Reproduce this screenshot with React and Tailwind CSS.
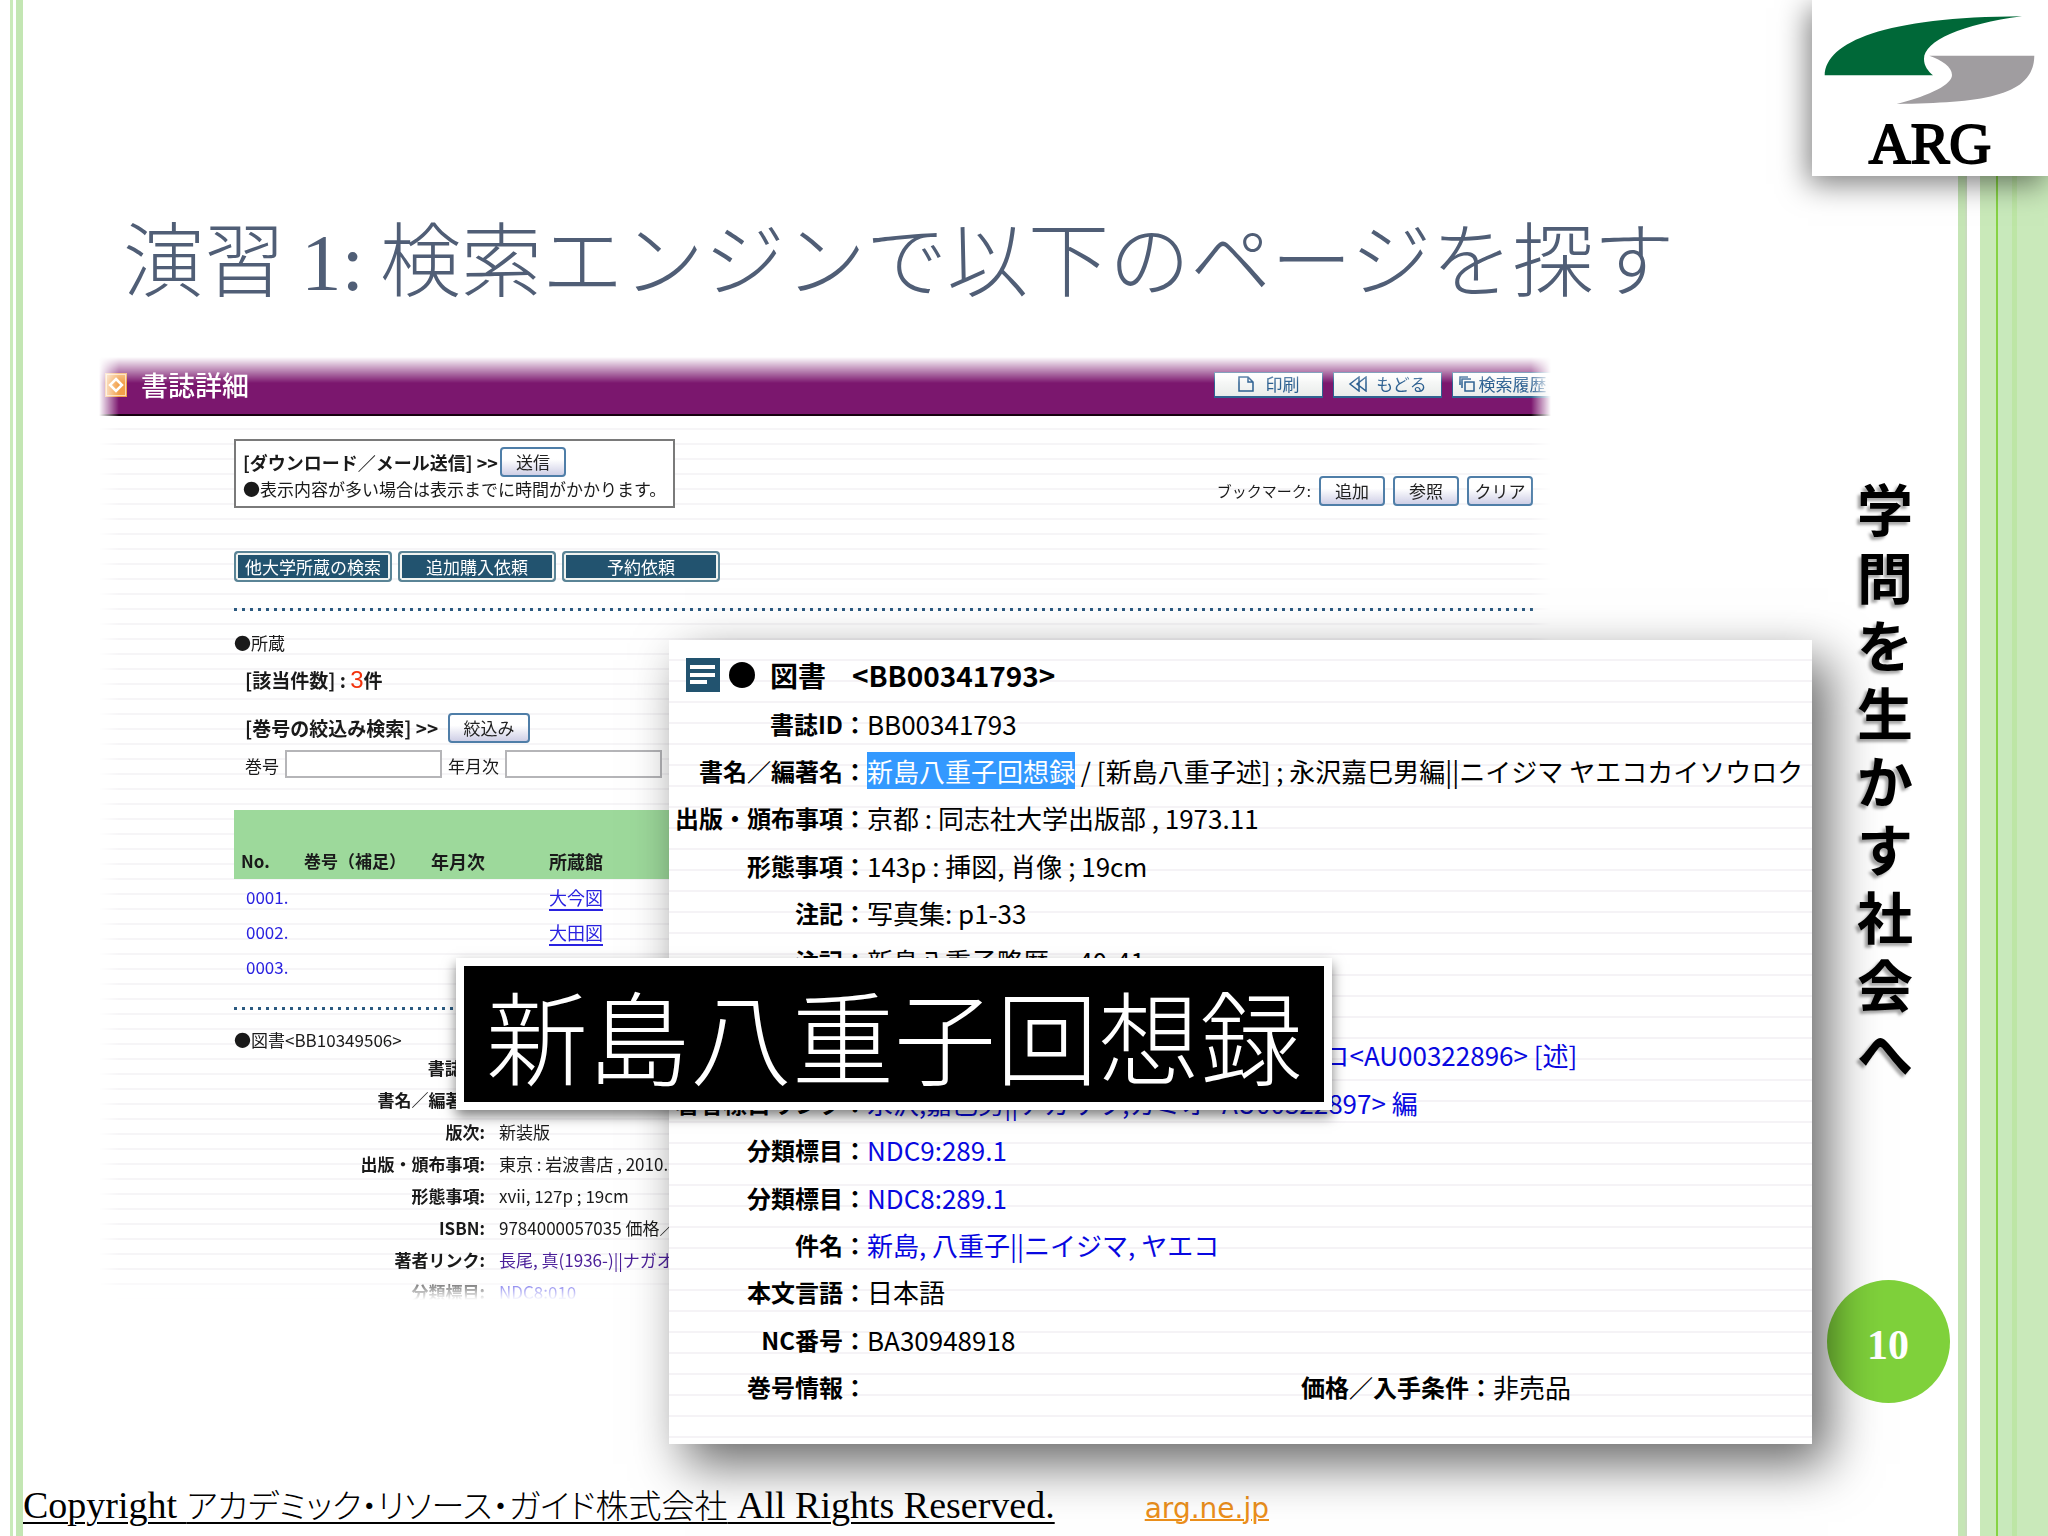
const GOTHIC = 'font-["Noto_Sans_CJK_JP",sans-serif]';
const MINCHO = 'font-["Liberation_Serif","Noto_Sans_CJK_JP",serif]';

function ArgLogo() {
  return (
    <div className="absolute top-0 right-0 z-20 flex h-[176px] w-[236px] flex-col items-center bg-white shadow-[-4px_8px_28px_rgba(0,0,0,0.5)]">
      <svg viewBox="0 0 236 112" className="h-[112px] w-full shrink-0" aria-hidden="true">
        <path d="M12.7 75.3C14 42 72 17 210 16.3C150 24 112 41 112 59C112 66 116 71 121 75.3Z" fill="#006838" />
        <path d="M117.3 55.7H222.3C222 96 172 103 84.7 104C120 95 140 84 140 75C140 67 130 60 117.3 55.7Z" fill="#a09da0" />
      </svg>
      <span className='font-["Liberation_Serif",serif] text-[58px] leading-[64px] text-black [-webkit-text-stroke:2px_black]'>ARG</span>
    </div>
  );
}

function FormButton({ children, className = "w-[66px]" }) {
  return (
    <button className={`h-[30px] shrink-0 rounded-[4px] border-2 border-[#4f7ea8] bg-linear-to-b from-white from-40% to-[#cfcfe6] text-center text-[17px] leading-[24px] text-[#222] ${className}`}>
      {children}
    </button>
  );
}

function TealButton({ children }) {
  return (
    <button className="h-[31px] w-[158px] rounded-[4px] border-2 border-[#5a8496] bg-[#22536f] text-[17px] leading-[22px] text-white shadow-[inset_0_0_0_2px_#f0f3f0]">
      {children}
    </button>
  );
}

function HeaderButton({ children, icon, className = "w-[109px]" }) {
  return (
    <button className={`flex h-[26px] shrink-0 items-center justify-center border border-b-2 border-[#2f6391] bg-linear-to-b from-white to-[#e9ecea] text-[17px] leading-[22px] text-[#2b5f90] ${className}`}>
      {icon}
      {children}
    </button>
  );
}

function DottedRule({ className }) {
  return <div className={`h-[3px] bg-[repeating-linear-gradient(90deg,#2b5a80_0_3px,transparent_3px_8px)] ${className}`} />;
}

const iconProps = { fill: "none", stroke: "#2b5f90", strokeWidth: 1.5, "aria-hidden": true };

const holdings = [
  { no: "0001.", place: "大今図" },
  { no: "0002.", place: "大田図" },
  { no: "0003.", place: "" },
];

const bookRows = [
  ["書誌ID:", "BB10349506"],
  ["書名／編著名:", "電子図書館"],
  ["版次:", "新装版"],
  ["出版・頒布事項:", "東京 : 岩波書店 , 2010.3"],
  ["形態事項:", "xvii, 127p ; 19cm"],
  ["ISBN:", "9784000057035 価格／入手条件"],
  ["著者リンク:", "長尾, 真(1936-)||ナガオ, マコト", "text-[#4b1f99]"],
  ["分類標目:", "NDC8:010", "text-[#2a22e0]"],
];

function CatalogPage() {
  return (
    <section className={`${GOTHIC} col-start-1 row-start-1 mr-[259px] ml-[74px] self-start overflow-hidden bg-[repeating-linear-gradient(180deg,white_0_13px,#f6f5f7_13px_15px)] text-[17px] leading-[24px] whitespace-nowrap text-[#1a1a1a] [mask-composite:intersect] [mask-image:linear-gradient(90deg,transparent_2px,black_22px,black_calc(100%-22px),transparent_calc(100%-2px)),linear-gradient(180deg,transparent_2px,black_28px,black_calc(100%-36px),transparent_calc(100%-8px))]`}>
      <header className="flex h-[61px] items-center border-b-2 border-[#16000f] bg-[#7b176e] pl-[8px]">
        <svg viewBox="0 0 22 24" className="h-[24px] w-[22px]" aria-hidden="true">
          <rect width="22" height="24" fill="#f2a04a" />
          <rect x="1.5" y="1.5" width="19" height="21" fill="none" stroke="#fbd9ae" />
          <path d="M11 6L17 12L11 18L5 12Z" fill="#f2a04a" stroke="white" strokeWidth="2.5" />
        </svg>
        <h2 className="ml-[14px] text-[27px] leading-[36px] font-medium text-white">書誌詳細</h2>
        <div className="ml-auto flex gap-[10px]">
          <HeaderButton icon={<svg viewBox="0 0 16 16" className="mr-[12px] size-[16px]" {...iconProps}><path d="M1 1H10L15 6V15H1Z M10 1V6H15" /></svg>}>印刷</HeaderButton>
          <HeaderButton icon={<svg viewBox="0 0 20 16" className="mr-[8px] h-[16px] w-[20px]" {...iconProps}><path d="M11 1L2 8L11 15ZM18 1L9 8L18 15Z" /></svg>}>もどる</HeaderButton>
          <HeaderButton className="w-[101px]" icon={<svg viewBox="0 0 16 16" className="mr-[4px] size-[16px] shrink-0" {...iconProps}><path d="M6 6H15V15H6ZM3 12V3H12M1 9V1H9" /></svg>}>検索履歴</HeaderButton>
        </div>
      </header>

      <div className="pr-[20px] pl-[137px]">
        <div className="mt-[23px] flex items-end justify-between">
          <div className="border-2 border-[#7a7a7a] bg-white px-[7px] pt-[6px] pb-[5px]">
            <div className="flex items-center gap-[2px]">
              <b className="text-[18px]">[ダウンロード／メール送信] &gt;&gt;</b>
              <FormButton>送信</FormButton>
            </div>
            <p>●表示内容が多い場合は表示までに時間がかかります。</p>
          </div>
          <div className="flex items-center gap-[8px] pb-[2px]">
            <span className="text-[15px]">ブックマーク:</span>
            <FormButton>追加</FormButton>
            <FormButton>参照</FormButton>
            <FormButton>クリア</FormButton>
          </div>
        </div>

        <div className="mt-[43px] flex gap-[6px]">
          <TealButton>他大学所蔵の検索</TealButton>
          <TealButton>追加購入依頼</TealButton>
          <TealButton>予約依頼</TealButton>
        </div>

        <DottedRule className="mt-[26px]" />

        <p className="mt-[20px]">●所蔵</p>
        <p className="mt-[13px] pl-[11px] text-[19px] font-bold">
          [該当件数] : <span className='font-["Liberation_Sans",sans-serif] text-[24px] font-normal text-[#f2320c]'>3</span>件
        </p>
        <div className="mt-[21px] flex items-center gap-[10px] pl-[11px]">
          <b className="text-[19px]">[巻号の絞込み検索] &gt;&gt;</b>
          <FormButton className="w-[82px]">絞込み</FormButton>
        </div>
        <div className="mt-[7px] flex items-end gap-[6px] pl-[11px]">
          <label htmlFor="volume">巻号</label>
          <input id="volume" className="h-[28px] w-[157px] border-2 border-[#b5b5b8] bg-white" />
          <label htmlFor="date">年月次</label>
          <input id="date" className="h-[28px] w-[157px] border-2 border-[#b5b5b8] bg-white" />
        </div>

        <table className="mt-[32px] w-full table-fixed text-left">
          <thead>
            <tr className="h-[69px] bg-[#9dd99b] align-bottom">
              <th className="w-[70px] pb-[6px] pl-[7px]">No.</th>
              <th className="w-[127px] pb-[6px]">巻号（補足）</th>
              <th className="w-[118px] pb-[6px] text-[18px]">年月次</th>
              <th className="pb-[6px] text-[18px]">所蔵館</th>
            </tr>
          </thead>
          <tbody className="text-[#2a22e0]">
            {holdings.map((h) => (
              <tr key={h.no} className="h-[35px]">
                <td className="pl-[12px]">{h.no}</td>
                <td />
                <td />
                <td className="text-[18px]">{h.place && <a href="#" className="underline decoration-2 underline-offset-4">{h.place}</a>}</td>
              </tr>
            ))}
          </tbody>
        </table>

        <DottedRule className="mt-[23px]" />

        <p className="mt-[18px]">●図書&lt;BB10349506&gt;</p>
        <dl className="grid auto-rows-[32px] grid-cols-[251px_1fr] items-center gap-x-[14px]">
          {bookRows.map(([label, value, color = ""]) => (
            <div key={label} className="contents">
              <dt className="text-right font-bold">{label}</dt>
              <dd className={color}>{value}</dd>
            </div>
          ))}
        </dl>
      </div>
    </section>
  );
}

const LINK = "text-[#0808e0]";

const detailRows = [
  { label: "書誌ID", value: "BB00341793" },
  {
    label: "書名／編著名",
    value: (
      <>
        <mark className="bg-[#3399ff] text-white">新島八重子回想録</mark> / [新島八重子述] ; 永沢嘉巳男編||ニイジマ ヤエコカイソウロク
      </>
    ),
  },
  { label: "出版・頒布事項", value: "京都 : 同志社大学出版部 , 1973.11" },
  { label: "形態事項", value: "143p : 挿図, 肖像 ; 19cm" },
  { label: "注記", value: "写真集: p1-33" },
  { label: "注記", value: "新島八重子略歴: p40-41" },
  { label: "", value: "" },
  { label: "著者標目リンク", value: "新島,八重子(1845-1932)||ニイジマ,ヤエコ<AU00322896> [述]", color: LINK },
  { label: "著者標目リンク", value: "永沢,嘉巳男||ナガサワ,カミオ<AU00322897> 編", color: LINK },
  { label: "分類標目", value: "NDC9:289.1", color: LINK },
  { label: "分類標目", value: "NDC8:289.1", color: LINK },
  { label: "件名", value: "新島, 八重子||ニイジマ, ヤエコ", color: LINK },
  { label: "本文言語", value: "日本語" },
  { label: "NC番号", value: "BA30948918" },
  {
    label: "巻号情報",
    value: (
      <span className="flex items-center pl-[434px]">
        <b className="text-[24px]">価格／入手条件：</b>非売品
      </span>
    ),
  },
];

function DetailCard() {
  return (
    <section className={`${GOTHIC} z-10 col-start-1 row-start-1 mt-[285px] ml-[646px] bg-[repeating-linear-gradient(180deg,white_0_19px,#f5f3f6_19px_21px)] pt-[18px] pb-[33px] whitespace-nowrap text-black shadow-[16px_20px_48px_rgba(0,0,0,0.6)]`}>
      <h2 className="flex h-[34px] items-center pl-[17px] text-[28px] leading-[34px] font-bold">
        <svg viewBox="0 0 34 34" className="size-[34px]" aria-hidden="true">
          <rect width="34" height="34" fill="#22536f" />
          <path d="M4 9H29M4 17H29M4 24H21" stroke="white" strokeWidth="4" />
        </svg>
        <span className="ml-[9px] size-[26px] rounded-full bg-black" />
        <span className="ml-[15px]">図書</span>
        <span className="ml-[26px]">&lt;BB00341793&gt;</span>
      </h2>
      <dl className="mt-[8px] grid h-[711px] auto-rows-fr grid-cols-[198px_1fr] items-center">
        {detailRows.map((row, i) => (
          <div key={i} className="contents">
            <dt className="text-right text-[24px] leading-[32px] font-bold">{row.label && row.label + "："}</dt>
            <dd className={`text-[26px] leading-[32px] ${row.color ?? ""}`}>{row.value}</dd>
          </div>
        ))}
      </dl>
    </section>
  );
}

export default function App() {
  return (
    <div className="relative flex min-h-screen overflow-hidden bg-white">
      <div className="flex w-[23px] shrink-0 justify-end gap-[3px]" aria-hidden="true">
        <div className="w-[3px] bg-[#c9eab9]" />
        <div className="w-[7px] bg-[#c3e6b3]" />
      </div>

      <main className="relative z-10 flex min-w-0 flex-1 flex-col">
        <h1 className={`${MINCHO} pt-[209px] pl-[100px] text-[81px] leading-[108px] font-light whitespace-nowrap text-[#505e76]`}>
          演習<span className="mx-[16px]">1:</span>検索エンジンで以下のページを探す
        </h1>

        <div className="mt-[38px] grid">
          <CatalogPage />
          <DetailCard />
          <p className={`${MINCHO} z-20 col-start-1 row-start-1 mt-[603px] ml-[433px] self-start justify-self-start border-8 border-white bg-black px-[22px] pt-[20px] text-[102px] leading-[116px] font-light whitespace-nowrap text-white shadow-[0_6px_12px_rgba(0,0,0,0.5)]`}>
            新島八重子回想録
          </p>
        </div>

        <footer className="mt-[39px] flex items-baseline gap-[90px] whitespace-nowrap">
          <p className={`${MINCHO} text-[38px] leading-[44px] font-light text-black underline decoration-2 underline-offset-4`}>
            Copyright <span className="text-[33px] leading-[40px] [font-feature-settings:'palt']">アカデミック・リソース・ガイド株式会社</span> All Rights Reserved.
          </p>
          <a href="#" className='font-["DejaVu_Sans",sans-serif] text-[28px] leading-[36px] text-[#eb8f1c] underline decoration-2'>arg.ne.jp</a>
        </footer>
      </main>

      <aside className="flex w-[146px] shrink-0 flex-col items-center pt-[473px]">
        <p className={`${GOTHIC} w-[56px] text-[56px] leading-[68px] font-bold break-all text-black [text-shadow:-3px_3px_3px_rgba(0,0,0,0.35)]`}>
          学問を生かす社会へ
        </p>
        <div className='mt-[195px] ml-[6px] flex size-[123px] items-center justify-center rounded-full bg-[#7fd13b] pt-[6px] font-["Liberation_Serif",serif] text-[42px] leading-[48px] font-bold text-white'>
          10
        </div>
      </aside>

      <div className="flex w-[90px] shrink-0" aria-hidden="true">
        <div className="w-[9px] border-r-2 border-[#c8dcbc] bg-[#c5e5b5]" />
        <div className="w-[13px]" />
        <div className="w-[16px] bg-[#c9e9b9]" />
        <div className="w-[2px] bg-[#86d343]" />
        <div className="w-[14px] bg-[#c8e9bb]" />
        <div className="w-[5px] bg-[#bde6a5]" />
        <div className="flex-1 bg-[#c9e9ba]" />
      </div>

      <ArgLogo />
    </div>
  );
}
